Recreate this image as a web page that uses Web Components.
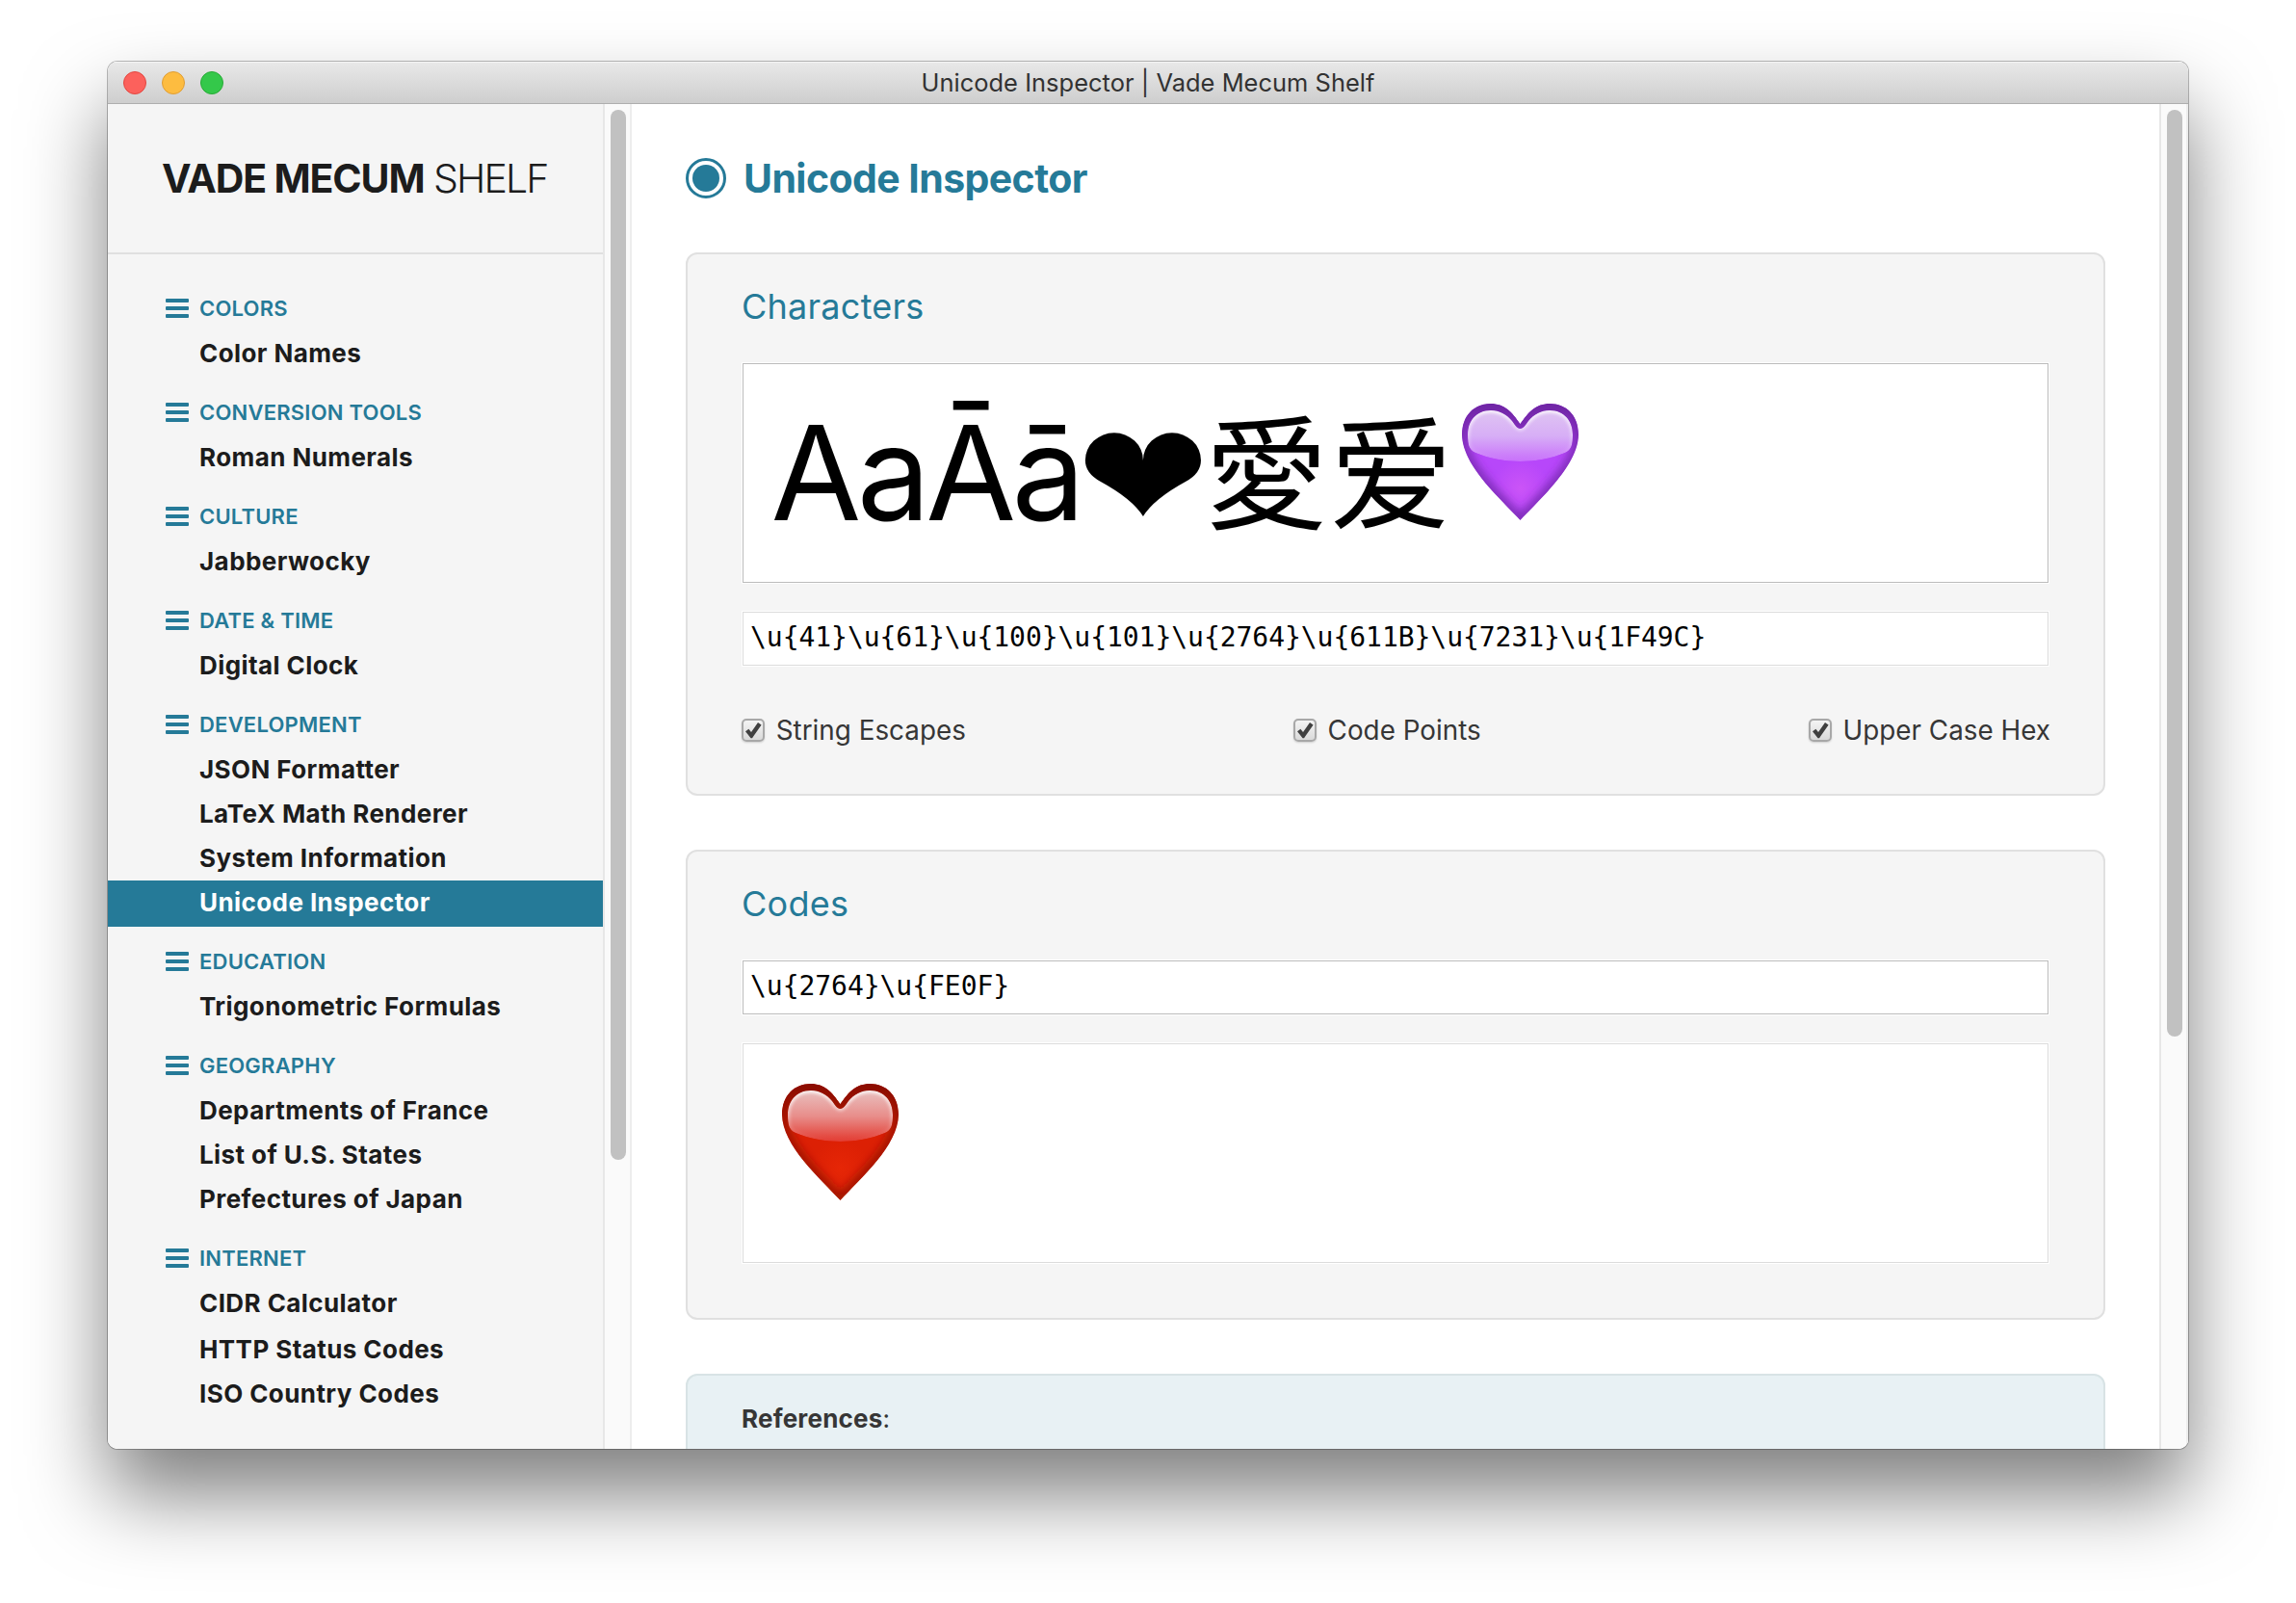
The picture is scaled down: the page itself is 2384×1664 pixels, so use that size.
<!DOCTYPE html>
<html lang="en">
<head>
<meta charset="utf-8">
<title>Unicode Inspector | Vade Mecum Shelf</title>
<style>
  html, body { margin: 0; height: 100%; }
  body {
    --accent: #257a98;
    --line: #e0e0e0;
    --panel: #f5f5f5;
    box-sizing: border-box;
    width: 2384px; height: 1664px;
    padding: 64px 112px 160px;
    background: #fff;
    font-family: Inter, "Liberation Sans", sans-serif;
    overflow: hidden;
  }
</style>
</head>
<body>
<app-window heading="Unicode Inspector | Vade Mecum Shelf">
  <side-bar slot="side">
    <nav-group label="Colors">
      <nav-item>Color Names</nav-item>
    </nav-group>
    <nav-group label="Conversion Tools">
      <nav-item>Roman Numerals</nav-item>
    </nav-group>
    <nav-group label="Culture">
      <nav-item>Jabberwocky</nav-item>
    </nav-group>
    <nav-group label="Date &amp; Time">
      <nav-item>Digital Clock</nav-item>
    </nav-group>
    <nav-group label="Development">
      <nav-item>JSON Formatter</nav-item>
      <nav-item>LaTeX Math Renderer</nav-item>
      <nav-item>System Information</nav-item>
      <nav-item current>Unicode Inspector</nav-item>
    </nav-group>
    <nav-group label="Education">
      <nav-item>Trigonometric Formulas</nav-item>
    </nav-group>
    <nav-group label="Geography">
      <nav-item>Departments of France</nav-item>
      <nav-item>List of U.S. States</nav-item>
      <nav-item>Prefectures of Japan</nav-item>
    </nav-group>
    <nav-group label="Internet">
      <nav-item>CIDR Calculator</nav-item>
      <nav-item spaced>HTTP Status Codes</nav-item>
      <nav-item>ISO Country Codes</nav-item>
    </nav-group>
  </side-bar>
  <scroll-track slot="side" style="--thumb: 1090px"></scroll-track>

  <tool-page heading="Unicode Inspector">
    <tool-card heading="Characters">
      <text-field editable large>
        <big-glyphs></big-glyphs>
      </text-field>
      <text-field>\u{41}\u{61}\u{100}\u{101}\u{2764}\u{611B}\u{7231}\u{1F49C}</text-field>
      <option-row slot="footer">
        <check-option>String Escapes</check-option>
        <check-option>Code Points</check-option>
        <check-option>Upper Case Hex</check-option>
      </option-row>
    </tool-card>
    <tool-card heading="Codes" padded>
      <text-field editable>\u{2764}\u{FE0F}</text-field>
      <text-field large><glossy-heart tone="red" style="margin: 41px 0 0 32.5px"></glossy-heart></text-field>
    </tool-card>
    <reference-card><b>References</b>:</reference-card>
  </tool-page>
  <scroll-track style="--thumb: 962px"></scroll-track>
</app-window>

<script>
function define(name, render) {
  customElements.define(name, class extends HTMLElement {
    constructor() {
      super();
      this.attachShadow({ mode: 'open' });
    }
    connectedCallback() {
      if (!this.shadowRoot.firstChild) this.shadowRoot.innerHTML = render(this);
    }
  });
}

define('app-window', el => `
<style>
  :host { display: flex; flex-direction: column; width: 2160px; height: 1440px; border-radius: 10px;
    box-shadow: 0 0 0 1px rgba(0,0,0,.27), 0 48px 84px rgba(0,0,0,.5); }
  .frame { flex: 1; display: flex; flex-direction: column; min-height: 0; overflow: hidden; border-radius: 10px; background: #fff; }
  header { flex: none; display: grid; grid-template-columns: 1fr auto 1fr; align-items: center; box-sizing: border-box;
    height: 44px; padding: 0 16px 0; border-top: 1px solid #f5f5f5; border-bottom: 1px solid #aeaeae;
    background: linear-gradient(#e8e8e8, #cecece); }
  .lights { display: flex; gap: 16px; }
  i { box-sizing: border-box; width: 24px; height: 24px; border-radius: 50%; border: 1px solid; }
  .r { background: #fc615c; border-color: #e2463f; }
  .y { background: #fdbc40; border-color: #df9d34; }
  .g { background: #34c84a; border-color: #27aa35; }
  h2 { margin: 0; font: 400 25.4px/42px Inter, sans-serif; letter-spacing: .05px; color: #323232; height: 42px; }
  .body { flex: 1; display: flex; min-height: 0; }
  .side { display: flex; }
</style>
<div class="frame">
  <header><div class="lights"><i class="r"></i><i class="y"></i><i class="g"></i></div><h2>${el.getAttribute('heading')}</h2></header>
  <div class="body"><div class="side"><slot name="side"></slot></div><slot></slot></div>
</div>`);

define('scroll-track', () => `
<style>
  :host { display: block; box-sizing: border-box; width: 30px; flex: none; padding: 6px 4px 0 6px;
    border-left: 2px solid #e7e7e7; border-right: 2px solid #ededed; background: #fafafa; }
  div { width: 16px; height: var(--thumb); border-radius: 8px; background: #c1c1c1; }
</style><div></div>`);

define('side-bar', () => `
<style>
  :host { display: block; width: 514px; background: var(--panel); color: #1c1c1c; }
  .logo { display: flex; align-items: center; gap: 9.5px; height: 154px; padding-left: 56px; border-bottom: 2px solid var(--line);
    font-size: 41px; white-space: nowrap; }
  b { font-weight: 700; letter-spacing: -1.14px; }
  span { font-weight: 300; letter-spacing: -1.9px; }
  nav { padding-top: 18px; }
</style>
<div class="logo"><b>VADE MECUM</b><span>SHELF</span></div>
<nav><slot></slot></nav>`);

define('nav-group', el => `
<style>
  :host { display: block; }
  h3 { display: flex; align-items: center; gap: 11px; box-sizing: border-box; height: 62px; margin: 0; padding: 14px 0 0 60px;
    color: var(--accent); font-size: 22px; line-height: 48px; font-weight: 600; letter-spacing: .22px; text-transform: uppercase; }
</style>
<h3><svg width="24" height="20" fill="currentColor"><rect width="24" height="4" rx="1"/><rect y="8" width="24" height="4" rx="1"/><rect y="16" width="24" height="4" rx="1"/></svg><span>${el.getAttribute('label').replace('&', '&amp;')}</span></h3>
<slot></slot>`);

define('nav-item', () => `
<style>
  :host { display: block; height: 46px; padding-left: 95px; font-size: 26px; line-height: 45px; font-weight: 700; letter-spacing: .42px; }
  :host([spaced]) { margin-top: 2px; }
  :host([current]) { height: 48px; margin-bottom: -2px; background: var(--accent); color: #fff; }
</style><slot></slot>`);

define('tool-page', el => `
<style>
  :host { flex: 1; display: flex; flex-direction: column; min-width: 0; padding: 0 56px; }
  h1 { flex: none; display: flex; align-items: center; gap: 18px; height: 154px; margin: 0; color: var(--accent);
    font-size: 41px; font-weight: 700; letter-spacing: -.58px; }
  .cards { display: flex; flex-direction: column; gap: 56px; }
</style>
<h1><svg width="42" height="42" viewBox="0 0 42 42"><circle cx="21" cy="21" r="19.5" fill="none" stroke="currentColor" stroke-width="3"/><circle cx="21" cy="21" r="14" fill="currentColor"/></svg><span>${el.getAttribute('heading')}</span></h1>
<div class="cards"><slot></slot></div>`);

define('tool-card', el => `
<style>
  :host { display: block; padding: 0 56px; border: 2px solid var(--line); border-radius: 12px; background: var(--panel); }
  :host([padded]) { padding-bottom: 56px; }
  h2 { margin: 0 0 4px; font-size: 36px; font-weight: 400; line-height: 108px; letter-spacing: .25px; color: var(--accent); }
  .fields { display: flex; flex-direction: column; gap: 28px; }
</style>
<h2>${el.getAttribute('heading')}</h2>
<div class="fields"><slot></slot></div>
<slot name="footer"></slot>`);

define('text-field', () => `
<style>
  :host { display: block; box-sizing: border-box; height: 58px; border: 1px solid #fff; background: #fff; color: #000;
    font: 28px/56px "DejaVu Sans Mono", monospace; letter-spacing: -.04px; white-space: nowrap; }
  div { box-sizing: border-box; height: 100%; padding-left: 7px; border: 1px solid #dcdcdc; line-height: 52px; display: flex; }
  :host([editable]) div { border-color: #bcbcbc; }
  :host([large]) { height: 230px; }
</style><div><slot></slot></div>`);

define('big-glyphs', () => `
<style>
  :host { display: block; padding-left: 21.5px; font: 136px/225px Inter, sans-serif; letter-spacing: -4.7px; white-space: nowrap; }
  span { line-height: 0; letter-spacing: 0; }
  .heart { display: inline-block; font-family: "DejaVu Sans"; font-size: 164.5px; margin-left: -4px; vertical-align: -12px; transform: scaleY(.94); }
  .ja { font-family: "Noto Sans CJK JP"; font-size: 128px; margin-left: -5px; }
  .zh { font-family: "Noto Sans CJK SC"; font-size: 128px; margin-left: 1.5px; }
  glossy-heart { margin-left: 10px; }
</style>AaĀā<span class="heart">❤</span><span class="ja" lang="ja">愛</span><span class="zh" lang="zh">爱</span><glossy-heart tone="purple"></glossy-heart>`);

const tones = {
  purple: { edge: '#6f25a4', side: '#7a2cb4', mid: '#b747fa', core: '#cb54f7', gloss: ['#dfc4f2', '#d7aef6', '#c86ffb'] },
  red: { edge: '#8a0c00', side: '#9c1200', mid: '#dc2004', core: '#e62606', gloss: ['#e9c0bf', '#e88e8b', '#e33a30'] }
};
define('glossy-heart', el => {
  const c = tones[el.getAttribute('tone')];
  const shape = 'M60.5 121C40 99 0 64 0 32C0 12 13 0 29.500 0C45 0 52 9 60.500 21C69 9 76 0 91.500 0C108 0 121 12 121 32C121 64 81 99 60.500 121Z';
  const gloss = 'M60.500 26C57 26 55 22 52 18C46 11 39 7 30 7C15 7 6 18 6 32C6 42 7 48 14 51C28 57 45 60 60.500 60C76 60 93 57 107 51C114 48 115 42 115 32C115 18 106 7 91 7C82 7 75 11 69 18C66 22 64 26 60.500 26Z';
  return `
<style>:host { display: inline-block; width: 121px; height: 121px; line-height: 0; } svg { display: block; }</style>
<svg width="121" height="121" viewBox="0 0 121 121">
  <defs>
    <radialGradient id="body" gradientUnits="userSpaceOnUse" cx="60.5" cy="88" r="60"><stop offset="0" stop-color="${c.core}"/><stop offset=".5" stop-color="${c.mid}"/><stop offset="1" stop-color="${c.mid}"/></radialGradient>
    <linearGradient id="top" x1="0" y1="0" x2="0" y2="1"><stop offset="0" stop-color="${c.edge}"/><stop offset=".42" stop-color="${c.edge}" stop-opacity="0"/></linearGradient>
    <linearGradient id="shine" x1="0" y1="0" x2="0" y2="1"><stop offset="0" stop-color="${c.gloss[0]}"/><stop offset=".5" stop-color="${c.gloss[1]}"/><stop offset="1" stop-color="${c.gloss[2]}"/></linearGradient>
    <linearGradient id="rim" x1="0" y1="0" x2="0" y2="1"><stop offset="0" stop-color="#fff" stop-opacity=".8"/><stop offset=".75" stop-color="#fff" stop-opacity=".1"/><stop offset="1" stop-color="#fff" stop-opacity="0"/></linearGradient>
    <clipPath id="outer"><path d="${shape}"/></clipPath>
    <clipPath id="inner"><path d="${gloss}"/></clipPath>
    <filter id="soft" x="-20%" y="-20%" width="140%" height="140%"><feGaussianBlur stdDeviation="5"/></filter>
    <filter id="fine" x="-20%" y="-20%" width="140%" height="140%"><feGaussianBlur stdDeviation="1.6"/></filter>
  </defs>
  <g clip-path="url(#outer)">
    <path d="${shape}" fill="url(#body)"/>
    <path d="${shape}" fill="none" stroke="${c.side}" stroke-width="10" filter="url(#soft)"/>
    <path d="${shape}" fill="url(#top)"/>
  </g>
  <g clip-path="url(#inner)">
    <path d="${gloss}" fill="url(#shine)"/>
    <path d="${gloss}" fill="none" stroke="url(#rim)" stroke-width="5" filter="url(#fine)"/>
  </g>
</svg>`;
});

define('option-row', () => `
<style>:host { display: flex; justify-content: space-between; align-items: center; height: 132px; margin-right: -1px; }</style><slot></slot>`);

define('check-option', () => `
<style>
  :host { display: flex; align-items: center; gap: 11.7px; font-size: 27.8px; letter-spacing: .02px; line-height: 40px; color: #363636; white-space: nowrap; }
  i { box-sizing: border-box; width: 24px; height: 24px; border: 2px solid #a8a8a8; border-radius: 5px;
    background: linear-gradient(#f4f4f4, #dadada); box-shadow: 0 1px 2px rgba(0,0,0,.16); }
  svg { display: block; margin: -2px; }
</style>
<i><svg width="24" height="24" viewBox="0 0 24 24"><path d="M4 13.300L7.400 10.800L10 14L17 4L20.600 6.400L11 20.200L9.600 20.200Z" fill="#404040"/></svg></i><span><slot></slot></span>`);

define('reference-card', () => `
<style>
  :host { display: block; height: 200px; padding: 0 56px; border: 2px solid #d8e3e5; border-radius: 12px; background: #e8f1f4;
    color: #363636; font-size: 26px; line-height: 89px; letter-spacing: .2px; }
</style><slot></slot>`);
</script>
</body>
</html>
